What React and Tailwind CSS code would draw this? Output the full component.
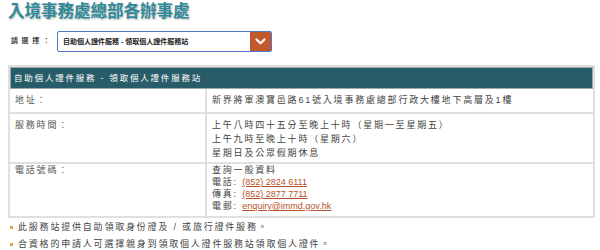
import React from 'react';

const Chevron = () => (
  <svg width="11" height="7" viewBox="0 0 11 7" fill="none">
    <path d="M1.5 1.5 L5.5 5.2 L9.5 1.5" stroke="white" strokeWidth="2.2" strokeLinecap="round" strokeLinejoin="round" />
  </svg>
);

const Link = ({ children }) => (
  <span className="text-[#b4532a] underline tracking-normal">{children}</span>
);

const App = () => {
  return (
    <div className="w-[600px] h-[250px] bg-white overflow-hidden text-[#444] font-['Liberation_Sans','Noto_Sans_CJK_TC',sans-serif]">
      {/* Title */}
      <h1 className="pl-2 pt-[1px] text-[16.5px] leading-[20px] font-bold text-[#2e8a9a] [text-shadow:1px_1px_2px_rgba(0,0,0,0.3)]">
        入境事務處總部各辦事處
      </h1>

      {/* Selector */}
      <div className="mt-[10px] flex items-center">
        <span className="pl-[11px] w-[57px] text-[7px] font-bold tracking-[3.6px] text-[#333]">請選擇：</span>
        <div className="w-[215px] h-[21px] flex border border-[#4f78c8] rounded-[2px] overflow-hidden">
          <div className="flex-1 pl-[5px] text-[7px] leading-[19px] font-bold text-[#222]">
            自助個人證件服務 - 領取個人證件服務站
          </div>
          <div className="w-[21px] bg-[#c0592b] flex items-center justify-center">
            <Chevron />
          </div>
        </div>
      </div>

      {/* Table */}
      <div className="mt-[13px] ml-2 w-[587px] border-2 border-[#e0e0e0] text-[9px] tracking-[1.8px]">
        <div className="h-[22px] bg-[#285c69] border border-[#9aa9ad] pl-[3px] flex items-center text-white text-[8.5px] tracking-[1.8px]">
          自助個人證件服務 - 領取個人證件服務站
        </div>

        <div className="grid grid-cols-[195px_1fr] border-b-2 border-[#e0e0e0]">
          <div className="pl-[5px] py-[4px] leading-[15px] text-[#555]">地址：</div>
          <div className="border-l-2 border-[#e0e0e0] pl-[5px] py-[4px] leading-[15px]">
            新界將軍澳寶邑路61號入境事務處總部行政大樓地下高層及1樓
          </div>
        </div>

        <div className="grid grid-cols-[195px_1fr] border-b-2 border-[#e0e0e0]">
          <div className="pl-[5px] pt-[4px] pb-[2px] leading-[14px] text-[#555]">服務時間：</div>
          <div className="border-l-2 border-[#e0e0e0] pl-[5px] pt-[4px] pb-[2px] leading-[14px]">
            <p>上午八時四十五分至晚上十時（星期一至星期五）</p>
            <p>上午九時至晚上十時（星期六）</p>
            <p>星期日及公眾假期休息</p>
          </div>
        </div>

        <div className="grid grid-cols-[195px_1fr]">
          <div className="pl-[5px] pt-0 pb-[4px] leading-[12px] text-[#555]">電話號碼：</div>
          <div className="border-l-2 border-[#e0e0e0] pl-[5px] pt-0 pb-[4px] leading-[12px]">
            <p>查詢一般資料</p>
            <p>電話: <Link>(852) 2824 6111</Link></p>
            <p>傳真: <Link>(852) 2877 7711</Link></p>
            <p>電郵: <Link>enquiry@immd.gov.hk </Link></p>
          </div>
        </div>
      </div>

      {/* Notes */}
      <ul className="mt-[3px] pl-[10px] flex flex-col gap-[5px] text-[9px] leading-[12px] tracking-[1.8px]">
        <li className="flex items-center gap-[5px]">
          <span className="w-[3px] h-[3px] bg-[#e3a24c]" />
          此服務站提供自助領取身份證及 / 或旅行證件服務。
        </li>
        <li className="flex items-center gap-[5px]">
          <span className="w-[3px] h-[3px] bg-[#e3a24c]" />
          合資格的申請人可選擇親身到領取個人證件服務站領取個人證件。
        </li>
      </ul>
    </div>
  );
};

export default App;
